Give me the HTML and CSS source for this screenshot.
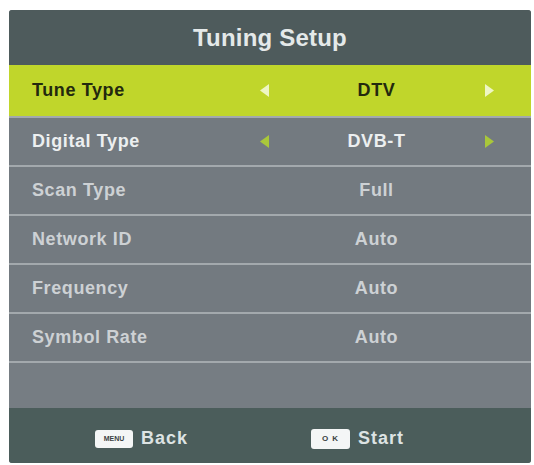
FILE: index.html
```html
<!DOCTYPE html>
<html>
<head>
<meta charset="utf-8">
<link rel="stylesheet" href="styles.css">
</head>
<body>
<div class="panel">
  <div class="header">Tuning Setup</div>
  <div class="row active">
    <span class="label">Tune Type</span>
    <span class="arrow"><svg width="11" height="13" viewBox="0 0 11 13"><polygon points="10,0 10,13 1,6.5" /></svg></span>
    <span class="value">DTV</span>
    <span class="arrow"><svg width="11" height="13" viewBox="0 0 11 13"><polygon points="1,0 1,13 10,6.5" /></svg></span>
  </div>
  <div class="sep"></div>
  <div class="row bright">
    <span class="label">Digital Type</span>
    <span class="arrow"><svg width="11" height="13" viewBox="0 0 11 13"><polygon points="10,0 10,13 1,6.5" /></svg></span>
    <span class="value">DVB-T</span>
    <span class="arrow"><svg width="11" height="13" viewBox="0 0 11 13"><polygon points="1,0 1,13 10,6.5" /></svg></span>
  </div>
  <div class="sep"></div>
  <div class="row">
    <span class="label">Scan Type</span>
    <span class="arrow"></span>
    <span class="value">Full</span>
    <span class="arrow"></span>
  </div>
  <div class="sep"></div>
  <div class="row">
    <span class="label">Network ID</span>
    <span class="arrow"></span>
    <span class="value">Auto</span>
    <span class="arrow"></span>
  </div>
  <div class="sep"></div>
  <div class="row">
    <span class="label">Frequency</span>
    <span class="arrow"></span>
    <span class="value">Auto</span>
    <span class="arrow"></span>
  </div>
  <div class="sep"></div>
  <div class="row">
    <span class="label">Symbol Rate</span>
    <span class="arrow"></span>
    <span class="value">Auto</span>
    <span class="arrow"></span>
  </div>
  <div class="sep"></div>
  <div class="empty"></div>
  <div class="footer">
    <div class="hint"><span class="key key-menu">MENU</span><span class="hint-text">Back</span></div>
    <div class="hint"><span class="key key-ok">O K</span><span class="hint-text">Start</span></div>
  </div>
</div>
</body>
</html>
```

FILE: styles.css
```css
html, body {
  margin: 0;
  padding: 0;
  background: #ffffff;
}
body {
  padding: 10px 3px 2px 9px;
  font-family: "Liberation Sans", Arial, sans-serif;
  font-weight: bold;
}
.panel {
  width: 522px;
  background: #737a80;
  border-radius: 3px;
  overflow: hidden;
  display: flex;
  flex-direction: column;
}
.header {
  height: 55px;
  background: #4e5b5c;
  color: #e4e9e9;
  font-size: 24px;
  letter-spacing: 0.2px;
  display: flex;
  align-items: center;
  justify-content: center;
  box-sizing: border-box;
}
.row {
  height: 47px;
  display: grid;
  grid-template-columns: 222px 20px 205px 20px;
  padding: 0 32px 0 23px;
  align-items: center;
  font-size: 18px;
  letter-spacing: 0.6px;
  color: #cdd1d4;
}
.row.active {
  height: 51px;
  background: #c0d62b;
  color: #23290e;
}
.row.bright {
  color: #eceff0;
}
.label {
  white-space: nowrap;
}
.value {
  text-align: center;
}
.arrow {
  display: flex;
  justify-content: center;
  align-items: center;
}
.active .arrow svg {
  fill: #eef6c4;
}
.bright .arrow svg {
  fill: #a9c73a;
}
.sep {
  height: 2px;
  background: #a3a9ad;
}
.empty {
  height: 45px;
  background: #767d83;
}
.footer {
  height: 55px;
  background: #4b5d5b;
  display: flex;
  align-items: center;
  padding: 6px 0 0 86px;
  box-sizing: border-box;
  gap: 123px;
}
.hint {
  display: flex;
  align-items: center;
  gap: 8px;
}
.key {
  background: #f4f6f6;
  border-radius: 3px;
  height: 18px;
  display: flex;
  align-items: center;
  justify-content: center;
  color: #3a4242;
  font-size: 7px;
  letter-spacing: 0;
}
.key-menu {
  width: 38px;
}
.key-ok {
  width: 39px;
  height: 20px;
  font-size: 8px;
  letter-spacing: 1px;
}
.hint-text {
  color: #dde3e3;
  font-size: 18px;
  letter-spacing: 1px;
}
```
